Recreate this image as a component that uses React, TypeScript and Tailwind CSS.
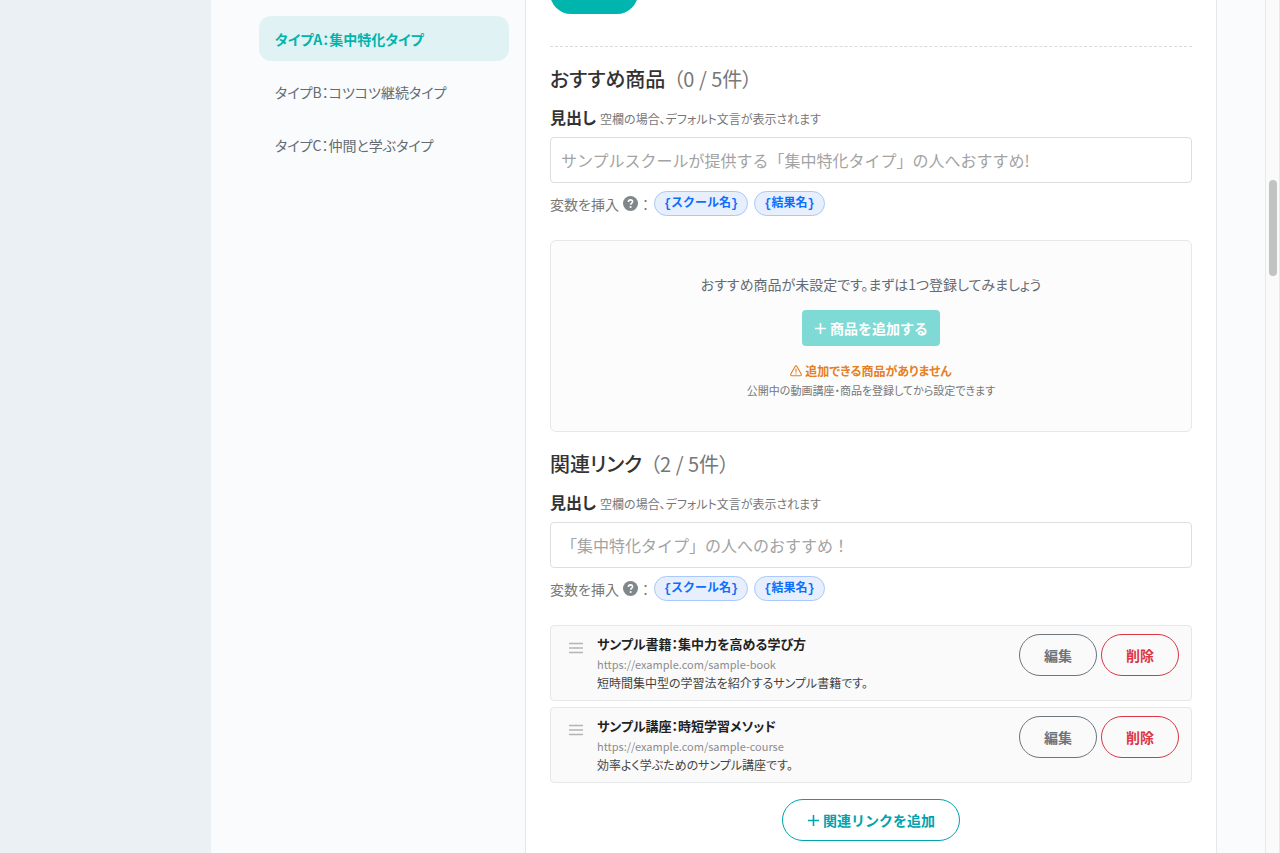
import React, { useState } from 'react';

// --- Data ---

const resultTypes = [
  'タイプA：集中特化タイプ',
  'タイプB：コツコツ継続タイプ',
  'タイプC：仲間と学ぶタイプ',
];

const variables = ['{スクール名}', '{結果名}'];

const relatedLinks = [
  {
    title: 'サンプル書籍：集中力を高める学び方',
    url: 'https://example.com/sample-book',
    description: '短時間集中型の学習法を紹介するサンプル書籍です。',
  },
  {
    title: 'サンプル講座：時短学習メソッド',
    url: 'https://example.com/sample-course',
    description: '効率よく学ぶためのサンプル講座です。',
  },
];

// --- Icons ---

const PlusIcon: React.FC = () => (
  <svg className="size-3 shrink-0" viewBox="0 0 12 12" fill="none" stroke="currentColor" strokeWidth="1.6" aria-hidden="true">
    <path d="M6.5 1v11M1 6.5h11" />
  </svg>
);

const HelpIcon: React.FC = () => (
  <svg className="size-[15px] shrink-0" viewBox="0 0 16 16" aria-hidden="true">
    <circle cx="8" cy="8" r="8" fill="#7f878a" />
    <path d="M5.8 6.3c0-1.3.9-2.2 2.2-2.2s2.2.9 2.2 2c0 1.6-2 1.6-2 3.2" fill="none" stroke="#fff" strokeWidth="1.7" />
    <circle cx="8.1" cy="11.8" r="1.1" fill="#fff" />
  </svg>
);

const WarningIcon: React.FC = () => (
  <svg className="size-3 shrink-0" viewBox="0 0 12 12" fill="none" stroke="currentColor" strokeWidth="1.1" strokeLinejoin="round" strokeLinecap="round" aria-hidden="true">
    <path d="M5.1 1.4 .8 9.1c-.4.8.1 1.7 1 1.7h8.4c.9 0 1.4-.9 1-1.7L6.9 1.4c-.4-.7-1.4-.7-1.8 0Z" />
    <path d="M6 4v3M6 8.8v.1" />
  </svg>
);

const HandleIcon: React.FC = () => (
  <svg className="mt-2 h-3 w-[14px] shrink-0" viewBox="0 0 14 12" stroke="#b5b5b5" strokeWidth="1.6" aria-hidden="true">
    <path d="M0 1.5h14M0 6h14M0 10.5h14" />
  </svg>
);

// --- Form parts ---

interface HeadingFieldProps {
  id: string;
  placeholder: string;
}

const HeadingField: React.FC<HeadingFieldProps> = ({ id, placeholder }) => {
  const [value, setValue] = useState('');

  return (
    <div className="mt-2">
      <label htmlFor={id} className="flex items-baseline gap-1 text-base leading-7 font-bold text-[#333]">
        見出し
        <small className="text-xs font-normal text-[#777]">空欄の場合、デフォルト文言が表示されます</small>
      </label>
      <input
        id={id}
        type="text"
        value={value}
        onChange={(e) => setValue(e.target.value)}
        placeholder={placeholder}
        className="mt-1.5 block h-[46px] w-full rounded border border-[#dcdfdf] bg-white px-[10px] text-base text-[#333] [font-feature-settings:normal] placeholder:text-[#a3a3a3]"
      />
      <div className="mt-2 flex h-[25px] items-center text-sm text-[#777]">
        <span>変数を挿入</span>
        <span className="ml-1 flex items-center gap-1">
          <HelpIcon />
          <span>：</span>
        </span>
        <div className="ml-[5px] flex gap-1.5">
          {variables.map((name) => (
            <button
              key={name}
              type="button"
              onClick={() => setValue(value + name)}
              className="h-[25px] rounded-full border border-[#a9c8fb] bg-[#e7effd] px-[9px] pt-px font-['Liberation_Mono','Noto_Sans_CJK_JP',monospace] text-xs font-bold text-[#0d6efd] [font-feature-settings:normal]"
            >
              {name}
            </button>
          ))}
        </div>
      </div>
    </div>
  );
};

const SectionTitle: React.FC<{ title: string; count: number }> = ({ title, count }) => (
  <h2 className="text-xl leading-8 font-medium text-[#333]">
    {title}
    <span className="ml-2 font-normal text-[#777]">（{count} / 5件）</span>
  </h2>
);

const App: React.FC = () => {
  const [activeType, setActiveType] = useState(resultTypes[0]);

  return (
    <div className="flex h-screen overflow-hidden bg-[#fafbfd] font-['Noto_Sans_CJK_JP',sans-serif] [font-feature-settings:'palt']">
      {/* Left gutter */}
      <aside className="w-[211px] shrink-0 bg-[#ebf0f4]" />

      {/* Result types */}
      <nav className="w-[314px] shrink-0 pt-4 pr-4 pl-12">
        <ul className="flex flex-col gap-2">
          {resultTypes.map((type) => (
            <li key={type}>
              <button
                type="button"
                onClick={() => setActiveType(type)}
                className={`h-[45px] w-full rounded-xl px-4 text-left text-sm ${
                  activeType === type ? 'bg-[#e0f2f4] font-bold text-[#00b5ad]' : 'text-[#646c73]'
                }`}
              >
                {type}
              </button>
            </li>
          ))}
        </ul>
      </nav>

      {/* Editor */}
      <main className="min-w-0 flex-1 overflow-hidden border-x border-[#e5e7e8] bg-white px-6">
        <button type="button" aria-label="保存" className="-mt-7 block h-[42px] w-[88px] rounded-full bg-[#00b5ad]" />

        <section className="mt-8 border-t border-dashed border-[#d9dcdc] pt-4">
          <SectionTitle title="おすすめ商品" count={0} />
          <HeadingField id="product-heading" placeholder="サンプルスクールが提供する「集中特化タイプ」の人へおすすめ!" />

          <div className="mt-6 flex flex-col items-center rounded-md border border-[#e5e7e8] bg-[#fcfcfc] px-6 pt-8 pb-[31px]">
            <p className="text-sm leading-[22px] text-[#646c73]">おすすめ商品が未設定です。まずは1つ登録してみましょう</p>
            <button
              type="button"
              disabled
              className="mt-[15px] flex h-9 items-center gap-1 rounded bg-[#7fdad6] px-3 text-sm font-bold text-white [font-feature-settings:normal]"
            >
              <PlusIcon />
              商品を追加する
            </button>
            <p className="mt-4 flex items-center gap-[3px] text-xs leading-[18px] font-bold text-[#e67e22]">
              <WarningIcon />
              追加できる商品がありません
            </p>
            <p className="text-[11px] leading-5 text-[#777]">公開中の動画講座・商品を登録してから設定できます</p>
          </div>
        </section>

        <section className="mt-4">
          <SectionTitle title="関連リンク" count={2} />
          <HeadingField id="link-heading" placeholder="「集中特化タイプ」の人へのおすすめ！" />

          <ul className="mt-6 flex flex-col gap-1.5">
            {relatedLinks.map((link) => (
              <li key={link.url} className="flex h-[76px] items-start rounded border border-[#e5e7e8] bg-[#fafafa] py-2 pr-3 pl-[18px]">
                <HandleIcon />
                <div className="ml-[14px] min-w-0 flex-1">
                  <p className="text-[13px] leading-5 font-bold text-[#222]">{link.title}</p>
                  <a href={link.url} className="block text-[11px] leading-5 text-[#8c8c8c]">{link.url}</a>
                  <p className="text-xs leading-[18px] text-[#444]">{link.description}</p>
                </div>
                <div className="flex gap-1">
                  <button type="button" className="h-[42px] w-[78px] rounded-full border border-[#6c757d] text-sm font-bold text-[#6c757d]">
                    編集
                  </button>
                  <button type="button" className="h-[42px] w-[78px] rounded-full border border-[#dc3545] text-sm font-bold text-[#dc3545]">
                    削除
                  </button>
                </div>
              </li>
            ))}
          </ul>

          <button
            type="button"
            className="mx-auto mt-4 flex h-[42px] items-center gap-1 rounded-full border border-[#00a3af] px-6 text-sm font-bold text-[#00a3af] [font-feature-settings:normal]"
          >
            <PlusIcon />
            関連リンクを追加
          </button>
        </section>
      </main>

      {/* Right gutter and scroll track */}
      <div className="w-12 shrink-0" />
      <div className="w-[15px] shrink-0 border-x border-[#e8e8e8] bg-[#fafafa] px-[3px] pt-[180px]">
        <div className="h-24 w-2 rounded-full bg-[#c1c3c3]" />
      </div>
    </div>
  );
};

export default App;
